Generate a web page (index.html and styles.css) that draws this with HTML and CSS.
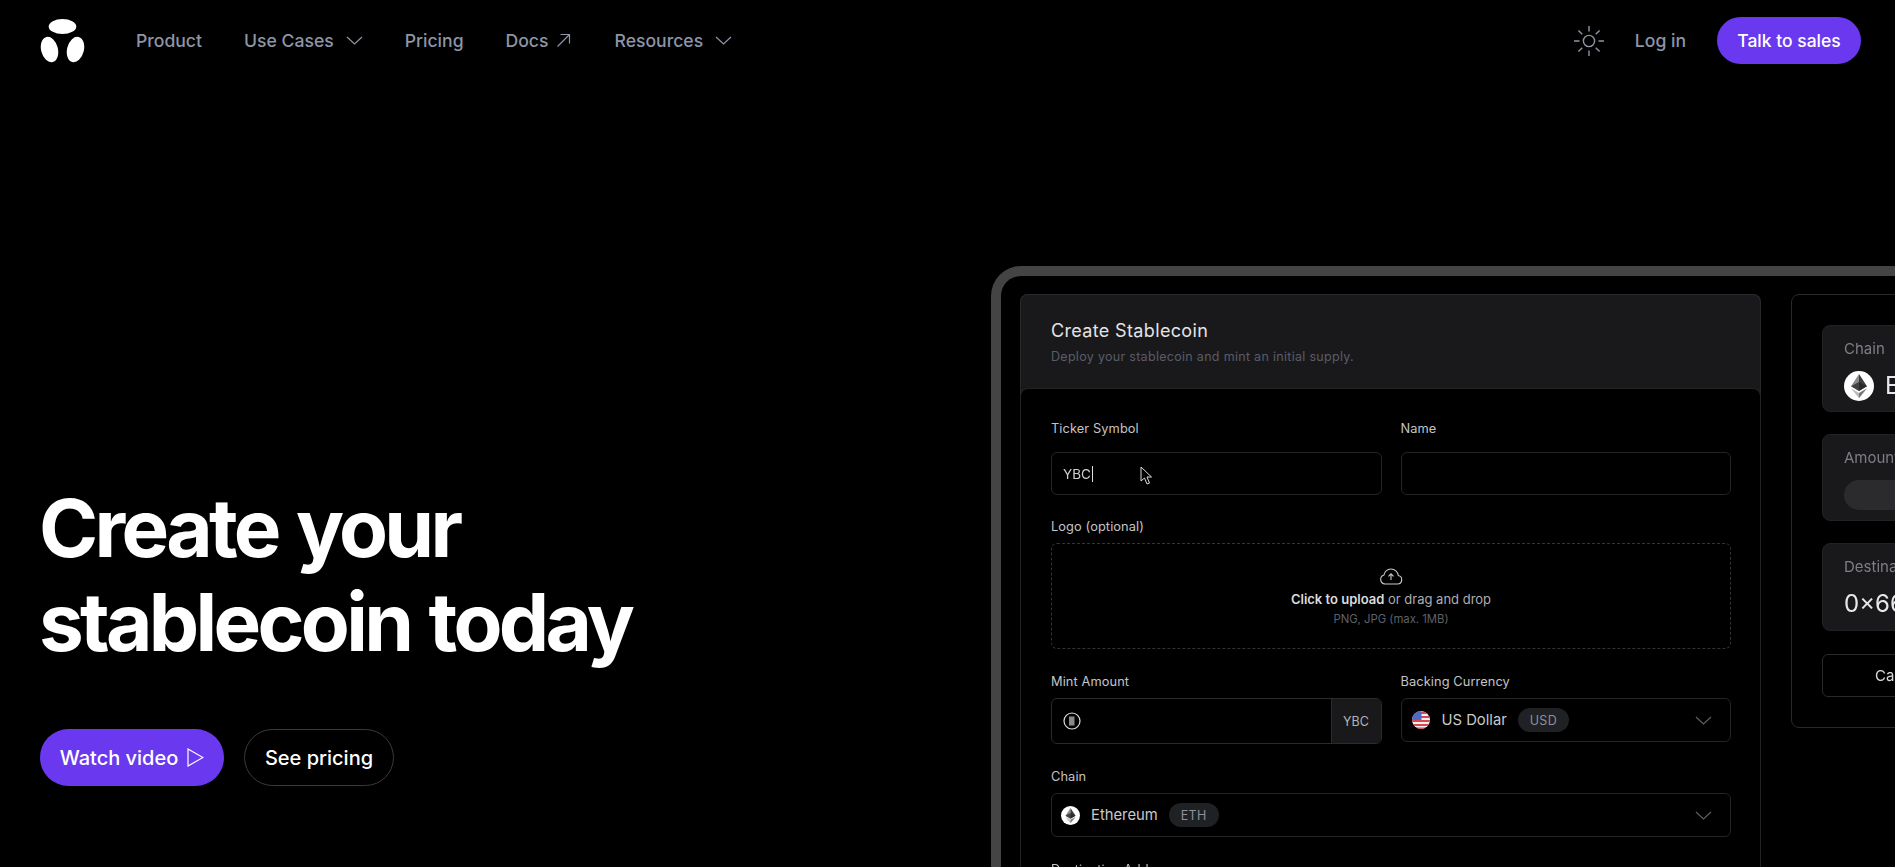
FILE: index.html
```html
<!DOCTYPE html>
<html lang="en">
<head>
  <meta charset="UTF-8">
  <meta name="viewport" content="width=device-width, initial-scale=1.0">
  <title>Create your stablecoin today</title>
  <link rel="stylesheet" href="styles.css">
</head>
<body>

  <!-- Top navigation -->
  <header class="topbar">
    <a class="logo" href="#" aria-label="Home">
      <svg width="46" height="44" viewBox="0 0 46 44" fill="#fff">
        <ellipse cx="22.5" cy="7.5" rx="13.8" ry="7.5"/>
        <ellipse cx="9.5" cy="30.5" rx="8.4" ry="13" transform="rotate(-14 9.5 30.5)"/>
        <ellipse cx="35.5" cy="30.5" rx="8.4" ry="13" transform="rotate(14 35.5 30.5)"/>
      </svg>
    </a>
    <nav class="nav-links">
      <a href="#">Product</a>
      <a href="#">Use Cases
        <svg class="chev" width="17" height="9" viewBox="0 0 17 9"><path d="M1 1l7.5 7L16 1"/></svg>
      </a>
      <a href="#">Pricing</a>
      <a class="nav-docs" href="#">Docs
        <svg class="chev" width="15" height="15" viewBox="0 0 15 15"><path d="M1.5 13.5L13.5 1.5M4.5 1.5h9v9"/></svg>
      </a>
      <a href="#">Resources
        <svg class="chev" width="17" height="9" viewBox="0 0 17 9"><path d="M1 1l7.5 7L16 1"/></svg>
      </a>
    </nav>
    <div class="nav-right">
      <svg class="sun" width="30" height="30" viewBox="0 0 30 30">
        <circle cx="15" cy="15" r="5.6"/>
        <path d="M15 0v5.5M15 24.5V30M0 15h5.5M24.5 15H30M4.4 4.4l3.9 3.9M21.7 21.7l3.9 3.9M4.4 25.6l3.9-3.9M21.7 8.3l3.9-3.9"/>
      </svg>
      <a class="login" href="#">Log in</a>
      <a class="btn-sales" href="#">Talk to sales</a>
    </div>
  </header>

  <main class="hero">
    <!-- Headline -->
    <section class="hero-copy">
      <h1>Create your<br>stablecoin today</h1>
      <div class="hero-actions">
        <a class="btn btn-primary" href="#">Watch video
          <svg width="17" height="19" viewBox="0 0 17 19" fill="none" stroke="#fff" stroke-width="1.2"><path d="M1 1l15 8.5L1 18z"/></svg>
        </a>
        <a class="btn btn-outline" href="#">See pricing</a>
      </div>
    </section>

    <!-- Product mock -->
    <section class="frame">
      <div class="card-create">
        <div class="create-head">
          <div class="create-title">Create Stablecoin</div>
          <div class="create-sub">Deploy your stablecoin and mint an initial supply.</div>
        </div>
        <div class="create-form">
          <div class="field field-top">
            <label>Ticker Symbol</label>
            <div class="input input-ticker">
              <span class="typed">YBC</span>
              <svg class="cursor" width="13" height="19" viewBox="0 0 13 19" fill="#000" stroke="#ddd" stroke-width="1"><path d="M1 1v14l3.5-3 2.5 6 2.5-1-2.5-6h4.5z"/></svg>
            </div>
          </div>
          <div class="field field-top">
            <label>Name</label>
            <div class="input"></div>
          </div>
          <div class="field field-wide field-logo">
            <label>Logo (optional)</label>
            <div class="dropzone">
              <svg width="24" height="17" viewBox="0 0 24 17" fill="none" stroke="#c9c9cc" stroke-width="1.1"><path d="M6 16h12.5a4.3 4.3 0 0 0 .8-8.5A7.3 7.3 0 0 0 12 1a7 7 0 0 0-7 6A4.6 4.6 0 0 0 6 16zM12 12V6M9.5 8.3L12 5.8l2.5 2.5"/></svg>
              <div class="drop-main"><b>Click to upload</b> or drag and drop</div>
              <div class="drop-hint">PNG, JPG (max. 1MB)</div>
            </div>
          </div>
          <div class="field">
            <label>Mint Amount</label>
            <div class="input input-amount">
              <div class="amount-value">
                <svg width="18" height="18" viewBox="0 0 18 18"><circle cx="9" cy="9" r="8" fill="none" stroke="#ddd" stroke-width="1.2"/><rect x="6" y="4.5" width="5.5" height="9" fill="#8a8a8e"/></svg>
              </div>
              <div class="amount-unit">YBC</div>
            </div>
          </div>
          <div class="field">
            <label>Backing Currency</label>
            <div class="input select">
              <svg class="flag" width="18" height="18" viewBox="0 0 18 18">
                <defs><clipPath id="flag-clip"><circle cx="9" cy="9" r="9"/></clipPath></defs>
                <g clip-path="url(#flag-clip)">
                  <rect width="18" height="18" fill="#eee"/>
                  <path d="M0 1h18v2H0zM0 5h18v2H0zM0 9h18v2H0zM0 13h18v2H0zM0 16.5h18V18H0z" fill="#d8454f"/>
                  <rect width="9.5" height="9" fill="#4a6cc2"/>
                </g>
              </svg>
              <span class="select-name">US Dollar</span>
              <span class="pill">USD</span>
              <svg class="chev chev-select" width="17" height="9" viewBox="0 0 17 9"><path d="M1 1l7.5 7L16 1"/></svg>
            </div>
          </div>
          <div class="field field-wide">
            <label>Chain</label>
            <div class="input select select-chain">
              <svg width="19" height="19" viewBox="0 0 30 30">
                <circle cx="15" cy="15" r="15" fill="#fff"/>
                <path d="M15 3l-8 12.3 8 4.7z" fill="#8c8c8c"/>
                <path d="M15 3l8 12.3-8 4.7z" fill="#3d3d3d"/>
                <path d="M15 11l-8 4.3 8 4.7 8-4.7z" fill="#222" opacity=".7"/>
                <path d="M7 17.3l8 10v-5.4z" fill="#bbb"/>
                <path d="M23 17.3l-8 10v-5.4z" fill="#777"/>
              </svg>
              <span class="select-name">Ethereum</span>
              <span class="pill">ETH</span>
              <svg class="chev chev-select" width="17" height="9" viewBox="0 0 17 9"><path d="M1 1l7.5 7L16 1"/></svg>
            </div>
          </div>
          <div class="field field-wide">
            <label>Destination Address</label>
            <div class="input"></div>
          </div>
        </div>
      </div>

      <div class="card-summary">
        <div class="stat">
          <div class="stat-label">Chain</div>
          <div class="stat-value">
            <svg width="30" height="30" viewBox="0 0 30 30">
              <circle cx="15" cy="15" r="15" fill="#fff"/>
              <path d="M15 3l-8 12.3 8 4.7z" fill="#8c8c8c"/>
              <path d="M15 3l8 12.3-8 4.7z" fill="#3d3d3d"/>
              <path d="M15 11l-8 4.3 8 4.7 8-4.7z" fill="#222" opacity=".7"/>
              <path d="M7 17.3l8 10v-5.4z" fill="#bbb"/>
              <path d="M23 17.3l-8 10v-5.4z" fill="#777"/>
            </svg>
            Ethereum
          </div>
        </div>
        <div class="stat">
          <div class="stat-label">Amount</div>
          <div class="stat-bar"></div>
        </div>
        <div class="stat stat-dest">
          <div class="stat-label">Destination</div>
          <div class="stat-value">0×66f820a414680B5bcda5eECA5dea238543F42054</div>
        </div>
        <div class="cancel"><span>Cancel</span></div>
      </div>
    </section>
  </main>

</body>
</html>
```
FILE: styles.css
```css
* {
  box-sizing: border-box;
}

html,
body {
  margin: 0;
  height: 867px;
  overflow: hidden;
  background-color: #000;
}

body {
  font-family: "Inter", "Liberation Sans", sans-serif;
  color: #fff;
}

a {
  color: inherit;
  text-decoration: none;
}

/* Top navigation */
.topbar {
  display: flex;
  align-items: center;
  height: 81px;
  padding: 0 34px 0 40px;
}

.logo {
  display: flex;
  margin-right: 50px;
}

.nav-links {
  display: flex;
  align-items: center;
  gap: 42px;
  font-size: 17.6px;
  font-weight: 500;
  color: #8d95a6;
}

.nav-links a {
  display: flex;
  align-items: center;
  gap: 12px;
}

.nav-links .nav-docs {
  gap: 7px;
  margin-right: 2px;
}

.chev path {
  fill: none;
  stroke: currentColor;
  stroke-width: 1.2;
}

.nav-right {
  display: flex;
  align-items: center;
  gap: 31px;
  margin-left: auto;
}

.sun {
  fill: none;
  stroke: #8d95a6;
  stroke-width: 1.4;
}

.login {
  font-size: 17.6px;
  font-weight: 500;
  color: #8d95a6;
}

.btn-sales {
  display: flex;
  align-items: center;
  justify-content: center;
  width: 144px;
  height: 47px;
  border-radius: 24px;
  background-color: #6938ef;
  font-size: 17.5px;
  font-weight: 500;
}

/* Hero */
.hero {
  display: flex;
  align-items: flex-start;
}

.hero-copy {
  flex: 0 0 991px;
  padding: 400px 0 0 39px;
}

h1 {
  margin: 0;
  font-size: 80px;
  line-height: 94px;
  font-weight: 700;
  letter-spacing: -3.7px;
  word-spacing: 3px;
}

.hero-actions {
  display: flex;
  gap: 20px;
  margin: 60px 0 0 1px;
}

.btn {
  display: flex;
  align-items: center;
  justify-content: center;
  gap: 9px;
  height: 57px;
  border-radius: 29px;
  font-size: 20px;
  font-weight: 500;
}

.btn-primary {
  width: 184px;
  background-color: #6938ef;
}

.btn-outline {
  width: 150px;
  border: 1px solid #3a3a3c;
}

/* Product mock */
.frame {
  display: flex;
  flex: 0 0 1200px;
  gap: 30px;
  height: 700px;
  margin-top: 185px;
  padding: 18px 0 0 19px;
  border: 10px solid #444;
  border-bottom: none;
  border-radius: 30px 30px 0 0;
  filter: blur(0.3px);
}

.card-create {
  flex: 0 0 741px;
  height: 680px;
  border-radius: 8px;
  background-color: #19191b;
  box-shadow: inset 0 0 0 1px #29292b;
}

.create-head {
  height: 94px;
  padding: 26px 30px 0 31px;
}

.create-title {
  font-size: 18px;
  line-height: 22px;
  letter-spacing: 0.35px;
  color: #e4e4e6;
}

.create-sub {
  margin-top: 7px;
  font-size: 12.5px;
  line-height: 16px;
  letter-spacing: 0.3px;
  color: #5a5c68;
}

.create-form {
  display: grid;
  grid-template-columns: 1fr 1fr;
  column-gap: 19px;
  row-gap: 25px;
  align-content: start;
  align-items: start;
  height: 586px;
  padding: 32px 29px 0 30px;
  border: 1px solid #232326;
  border-bottom: none;
  border-radius: 8px 8px 0 0;
  background-color: #000;
}

.field label {
  display: block;
  height: 16px;
  margin-bottom: 8px;
  font-size: 12.8px;
  line-height: 16px;
  letter-spacing: 0.1px;
  color: #c4c4c7;
}

.field-top label {
  margin-bottom: 15px;
}

.field-wide {
  grid-column: 1 / 3;
}

.field-logo {
  margin-top: -1px;
}

.input {
  height: 44px;
  border: 1px solid #252527;
  border-radius: 6px;
}

.field-top .input {
  height: 43px;
}

.input-ticker {
  position: relative;
  display: flex;
  align-items: center;
  padding-left: 11px;
}

.typed {
  padding-right: 1px;
  border-right: 1px solid #ddd;
  font-size: 13.5px;
  line-height: 16px;
  color: #cfcfd2;
}

.cursor {
  position: absolute;
  top: 13px;
  left: 88px;
}

.dropzone {
  display: flex;
  flex-direction: column;
  align-items: center;
  height: 106px;
  padding-top: 24px;
  border: 1px dashed #333336;
  border-radius: 6px;
}

.drop-main {
  margin-top: 6px;
  font-size: 13px;
  line-height: 16px;
  color: #aeaeb2;
}

.drop-main b {
  font-weight: 600;
  color: #dcdcde;
}

.drop-hint {
  margin-top: 5px;
  font-size: 11.3px;
  line-height: 14px;
  color: #5f6169;
}

.input-amount {
  display: flex;
  height: 46px;
  overflow: hidden;
  border-color: #2b2b2e;
}

.amount-value {
  display: flex;
  flex: 1;
  align-items: center;
  padding-left: 11px;
  border-right: 1px solid #2b2b2e;
}

.amount-unit {
  display: flex;
  flex: 0 0 49px;
  align-items: center;
  justify-content: center;
  background-color: #19191b;
  font-size: 12.5px;
  color: #b4b4b8;
}

.select {
  display: flex;
  align-items: center;
  padding-left: 10px;
  padding-right: 18px;
  color: #5e5e64;
}

.select-chain {
  padding-left: 9px;
}

.select-name {
  margin-left: 12px;
  font-size: 14.8px;
  color: #c9c9cc;
}

.select-chain .select-name {
  margin-left: 11px;
}

.pill {
  display: flex;
  align-items: center;
  height: 24px;
  margin-left: 11px;
  padding: 0 12px;
  border-radius: 12px;
  background-color: #202124;
  font-size: 12.5px;
  letter-spacing: 0.3px;
  color: #8f9098;
}

.chev-select {
  margin-left: auto;
}

/* Summary card, cut off by the window edge */
.card-summary {
  display: flex;
  flex: 0 0 380px;
  flex-direction: column;
  gap: 22px;
  height: 434px;
  padding: 30px;
  border: 1px solid #29292b;
  border-radius: 8px;
}

.stat {
  flex: none;
  height: 87px;
  padding: 13px 21px 0;
  border: 1px solid #222224;
  border-radius: 8px;
  background-color: #19191b;
}

.stat-dest {
  height: 88px;
}

.stat-label {
  font-size: 15px;
  line-height: 20px;
  color: #7d7e86;
}

.stat-value {
  display: flex;
  align-items: center;
  gap: 11px;
  margin-top: 12px;
  font-size: 24px;
  line-height: 30px;
  color: #e8e8ea;
  white-space: nowrap;
}

.stat-bar {
  width: 200px;
  height: 30px;
  margin-top: 12px;
  border-radius: 15px;
  background-color: #2b2b2e;
}

.cancel {
  display: flex;
  flex: none;
  align-items: center;
  height: 43px;
  margin-top: 1px;
  padding-left: 52px;
  border: 1px solid #2a2a2c;
  border-radius: 6px;
  font-size: 15px;
  color: #d8d8da;
}
```
